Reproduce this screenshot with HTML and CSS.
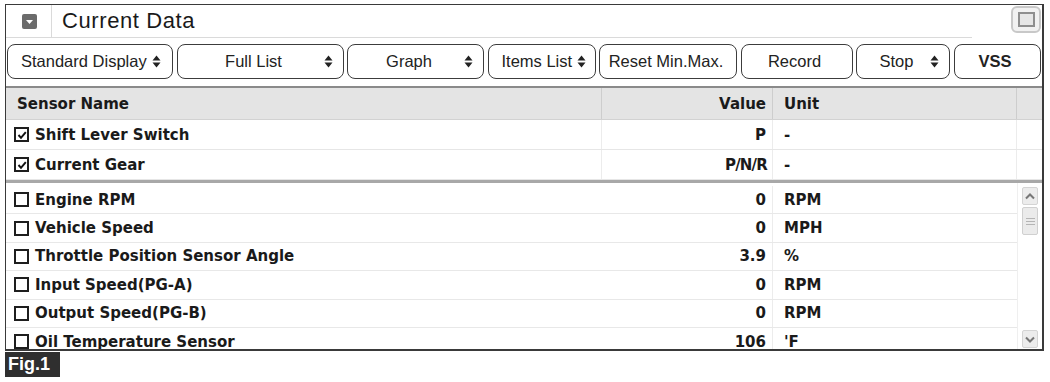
FILE: index.html
```html
<!DOCTYPE html>
<html>
<head>
<meta charset="utf-8">
<link rel="stylesheet" href="styles.css">
</head>
<body>
<div class="panel">
  <div class="titlebar">
    <div class="title-main">
      <div class="ticon-cell">
        <span class="ticon"><svg width="15" height="15" viewBox="0 0 15 15"><rect x="0" y="0" width="15" height="15" rx="2" fill="#6b6b6b"/><path d="M4 6 L11 6 L7.5 10 Z" fill="#fff"/></svg></span>
      </div>
      <div class="title-text">Current Data</div>
    </div>
    <div class="winbtn"><span class="winbtn-inner"></span></div>
  </div>
  <div class="toolbar">
    <div class="btn"><span class="btn-label tight">Standard Display</span><span class="updown"><svg width="9" height="13" viewBox="0 0 9 13"><path d="M0.5 5.5 L4.5 0.5 L8.5 5.5 Z M0.5 7.5 L8.5 7.5 L4.5 12.5 Z" fill="#222"/></svg></span></div>
    <div class="btn"><span class="btn-label">Full List</span><span class="updown"><svg width="9" height="13" viewBox="0 0 9 13"><path d="M0.5 5.5 L4.5 0.5 L8.5 5.5 Z M0.5 7.5 L8.5 7.5 L4.5 12.5 Z" fill="#222"/></svg></span></div>
    <div class="btn"><span class="btn-label">Graph</span><span class="updown"><svg width="9" height="13" viewBox="0 0 9 13"><path d="M0.5 5.5 L4.5 0.5 L8.5 5.5 Z M0.5 7.5 L8.5 7.5 L4.5 12.5 Z" fill="#222"/></svg></span></div>
    <div class="btn"><span class="btn-label tight">Items List</span><span class="updown"><svg width="9" height="13" viewBox="0 0 9 13"><path d="M0.5 5.5 L4.5 0.5 L8.5 5.5 Z M0.5 7.5 L8.5 7.5 L4.5 12.5 Z" fill="#222"/></svg></span></div>
    <div class="btn"><span class="btn-label">Reset Min.Max.</span></div>
    <div class="btn"><span class="btn-label">Record</span></div>
    <div class="btn"><span class="btn-label">Stop</span><span class="updown"><svg width="9" height="13" viewBox="0 0 9 13"><path d="M0.5 5.5 L4.5 0.5 L8.5 5.5 Z M0.5 7.5 L8.5 7.5 L4.5 12.5 Z" fill="#222"/></svg></span></div>
    <div class="btn"><span class="btn-label bold">VSS</span></div>
  </div>

  <div class="row head">
    <div class="c-name">Sensor Name</div>
    <div class="c-val">Value</div>
    <div class="c-unit">Unit</div>
    <div class="c-end"></div>
  </div>
  <div class="row pinned">
    <div class="c-name"><span class="cb checked"><svg width="10" height="10" viewBox="0 0 10 10"><path d="M1.5 5 L4 7.8 L8.8 2.2" fill="none" stroke="#111" stroke-width="2"/></svg></span>Shift Lever Switch</div>
    <div class="c-val">P</div>
    <div class="c-unit">-</div>
    <div class="c-end"></div>
  </div>
  <div class="row pinned">
    <div class="c-name"><span class="cb checked"><svg width="10" height="10" viewBox="0 0 10 10"><path d="M1.5 5 L4 7.8 L8.8 2.2" fill="none" stroke="#111" stroke-width="2"/></svg></span>Current Gear</div>
    <div class="c-val narrow">P/N/R</div>
    <div class="c-unit">-</div>
    <div class="c-end"></div>
  </div>

  <div class="scroll-area">
    <div class="scroll-rows">
      <div class="row srow"><div class="c-name"><span class="cb"></span>Engine RPM</div><div class="c-val">0</div><div class="c-unit">RPM</div></div>
      <div class="row srow"><div class="c-name"><span class="cb"></span>Vehicle Speed</div><div class="c-val">0</div><div class="c-unit">MPH</div></div>
      <div class="row srow"><div class="c-name"><span class="cb"></span>Throttle Position Sensor Angle</div><div class="c-val">3.9</div><div class="c-unit">%</div></div>
      <div class="row srow"><div class="c-name"><span class="cb"></span>Input Speed(PG-A)</div><div class="c-val">0</div><div class="c-unit">RPM</div></div>
      <div class="row srow"><div class="c-name"><span class="cb"></span>Output Speed(PG-B)</div><div class="c-val">0</div><div class="c-unit">RPM</div></div>
      <div class="row srow"><div class="c-name"><span class="cb"></span>Oil Temperature Sensor</div><div class="c-val">106</div><div class="c-unit">'F</div></div>
    </div>
    <div class="scrollbar">
      <div class="sb-btn"><svg width="10" height="7" viewBox="0 0 10 7"><path d="M1 5.5 L5 1.5 L9 5.5" fill="none" stroke="#777" stroke-width="2"/></svg></div>
      <div class="sb-thumb"><span></span><span></span><span></span></div>
      <div class="sb-track"></div>
      <div class="sb-btn"><svg width="10" height="7" viewBox="0 0 10 7"><path d="M1 1.5 L5 5.5 L9 1.5" fill="none" stroke="#777" stroke-width="2"/></svg></div>
    </div>
  </div>
</div>
<div class="fig">Fig.1</div>
</body>
</html>
```

FILE: styles.css
```css
* { box-sizing: border-box; }
body {
  margin: 0;
  background: #fff;
  font-family: "DejaVu Sans", sans-serif;
  color: #1a1a1a;
}
.panel {
  margin: 4px 0 0 5px;
  width: 1039px;
  border: 1px solid #3a3a3a;
  border-right-width: 2px;
  border-bottom-width: 2px;
  background: #fff;
}
.titlebar {
  display: flex;
  height: 33px;
}
.title-main {
  display: flex;
  align-items: center;
  width: 966px;
  border-bottom: 1px solid #dadada;
}
.ticon-cell {
  width: 46px;
  height: 100%;
  border-right: 1px solid #dadada;
  display: flex;
  align-items: center;
  padding-left: 16px;
}
.ticon { display: block; width: 15px; height: 15px; }
.ticon svg { display: block; }
.title-text {
  padding-left: 10px;
  font-family: "Liberation Sans", sans-serif;
  font-size: 22px;
  letter-spacing: 0.6px;
  color: #1a1a1a;
}
.winbtn {
  margin: 1px 0 0 39px;
  width: 30px;
  height: 27px;
  border: 2px solid #c8c8c8;
  border-radius: 6px;
  background: #f1f1f1;
  display: flex;
  align-items: center;
  justify-content: center;
}
.winbtn-inner {
  width: 17px;
  height: 15px;
  border: 2px solid #8e8e8e;
  background: #e6e6e6;
}
.toolbar {
  display: grid;
  grid-template-columns: 166px 167px 137px 108px 138px 112px 94px 87px;
  column-gap: 3.5px;
  padding: 6px 0 7px 1px;
  border-bottom: 2px solid #8a8a8a;
}
.btn {
  height: 35px;
  border: 1.5px solid #3c3c3c;
  border-radius: 8px;
  display: flex;
  align-items: center;
  padding: 0 10px 0 6px;
  font-family: "Liberation Sans", sans-serif;
  font-size: 16.5px;
  letter-spacing: 0;
  color: #222;
}
.btn-label {
  flex: 1;
  text-align: center;
  white-space: nowrap;
}
.btn-label.tight { flex: 0 1 auto; margin-left: 7px; margin-right: 5px; }
.btn-label.bold { font-weight: bold; }
.updown { display: flex; align-items: center; }
.updown svg { display: block; }

.row {
  display: grid;
  grid-template-columns: 596px 171px 244px 1fr;
  align-items: stretch;
  font-size: 15px;
  font-weight: bold;
}
.row > div {
  display: flex;
  align-items: center;
  white-space: nowrap;
}
.head {
  height: 32px;
  background: #e4e4e4;
  border-bottom: 1px solid #d2d2d2;
}
.head .c-name { padding-left: 11px; }
.head > div { border-right: 1px solid #cdcdcd; }
.head .c-end { border-right: none; }
.c-val { justify-content: flex-end; padding-right: 6px; }
.c-val.narrow { letter-spacing: -0.8px; padding-right: 5px; }
.c-unit { padding-left: 11px; }
.c-name { padding-left: 8px; }
.pinned {
  height: 30px;
  border-bottom: 1px solid #e6e6e6;
}
.pinned > div { border-right: 1px solid #ececec; }
.pinned .c-end { border-right: none; }
.pinned:last-of-type { border-bottom: none; }

.cb {
  width: 15px;
  height: 15px;
  border: 2px solid #1e1e1e;
  margin-right: 6px;
  display: flex;
  align-items: center;
  justify-content: center;
  flex: none;
}
.cb svg { display: block; }

.scroll-area {
  display: grid;
  grid-template-columns: 1011px 1fr;
  grid-template-rows: 166px;
  border-top: 3px solid #a8a8a8;
}
.scroll-rows { padding-top: 3px; overflow: hidden; }
.srow {
  grid-template-columns: 596px 171px 244px;
  height: 28.4px;
  border-bottom: 1px solid #e8e8e8;
}
.srow .c-val { border-right: 1px solid #ececec; }
.scrollbar {
  display: flex;
  flex-direction: column;
  padding: 4px 4px 1px 4px;
  border-left: 1px solid #efefef;
}
.sb-btn {
  height: 18px;
  border: 1px solid #d4d4d4;
  border-radius: 2px;
  background: #ececec;
  display: flex;
  align-items: center;
  justify-content: center;
  flex: none;
}
.sb-btn svg { display: block; }
.sb-thumb {
  margin-top: 2px;
  height: 28px;
  border: 1px solid #d0d0d0;
  border-radius: 2px;
  background: #ebebeb;
  display: flex;
  flex-direction: column;
  justify-content: center;
  align-items: center;
  gap: 2px;
  flex: none;
}
.sb-thumb span {
  width: 9px;
  height: 1px;
  background: #b5b5b5;
}
.sb-track { flex: 1; }

.fig {
  margin: 1px 0 0 5px;
  width: 55px;
  height: 25px;
  background: #2f2f2f;
  color: #fff;
  font-family: "Liberation Sans", sans-serif;
  font-weight: bold;
  font-size: 18px;
  line-height: 25px;
  padding-left: 3px;
}
```
